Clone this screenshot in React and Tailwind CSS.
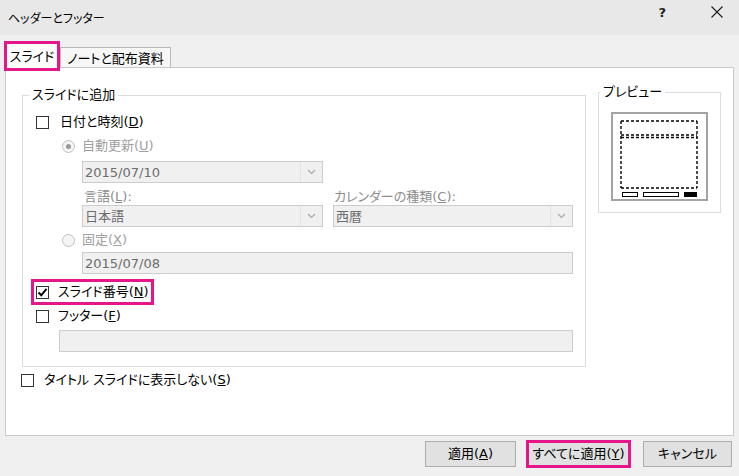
import React from 'react';

const PINK = 'border-[#e4168a]';

function Check({ checked }) {
  return (
    <span className="w-[13px] h-[13px] shrink-0 border border-[#333333] bg-white flex items-center justify-center">
      {checked && (
        <svg width="11" height="11" viewBox="0 0 11 11">
          <path d="M1.5 5.5 L4.2 8.3 L9.5 1.8" fill="none" stroke="#000" strokeWidth="2" />
        </svg>
      )}
    </span>
  );
}

function Radio({ checked }) {
  return (
    <span className="w-[13px] h-[13px] shrink-0 rounded-full border border-[#c2c2c2] bg-[#f4f4f4] flex items-center justify-center">
      {checked && <span className="w-[5px] h-[5px] rounded-full bg-[#9a9a9a]" />}
    </span>
  );
}

function Combo({ value, w }) {
  return (
    <div className={`${w} h-[22px] border border-[#cccccc] bg-[#f0f0f0] flex items-center`}>
      <span className="flex-1 pl-[2px] text-[#6d6d6d] leading-none">{value}</span>
      <span className="w-[22px] h-full border-l border-[#e2e2e2] flex items-center justify-center">
        <svg width="9" height="6" viewBox="0 0 9 6">
          <path d="M1 1 L4.5 4.5 L8 1" fill="none" stroke="#a8a8a8" strokeWidth="1.2" />
        </svg>
      </span>
    </div>
  );
}

function TextBox({ value, w }) {
  return (
    <div className={`${w} h-[22px] border border-[#cccccc] bg-[#f0f0f0] flex items-center pl-[2px] text-[#6d6d6d] leading-none`}>
      {value}
    </div>
  );
}

function Preview() {
  const dash = { stroke: '#000', strokeWidth: 1.4, strokeDasharray: '3 2', fill: 'none' };
  return (
    <svg width="97" height="89" viewBox="0 0 97 89">
      <rect x="1" y="1" width="95" height="87" fill="#fff" stroke="#a3a3a3" strokeWidth="2" />
      <line x1="10" y1="9" x2="86" y2="9" style={dash} />
      <line x1="10" y1="23" x2="86" y2="23" style={dash} />
      <line x1="10" y1="25.5" x2="86" y2="25.5" style={dash} />
      <line x1="10" y1="9" x2="10" y2="76" style={dash} />
      <line x1="86" y1="9" x2="86" y2="76" style={dash} />
      <line x1="10" y1="76" x2="86" y2="76" style={dash} />
      <rect x="11.5" y="80.5" width="15" height="4" fill="#fff" stroke="#000" strokeWidth="1" />
      <rect x="32.5" y="80.5" width="35" height="4" fill="#fff" stroke="#000" strokeWidth="1" />
      <rect x="73" y="80" width="13" height="5" fill="#000" />
    </svg>
  );
}

export default function App() {
  return (
    <div className="w-[739px] h-[476px] overflow-hidden bg-[#f0f0f0] flex flex-col text-[13px] text-black font-['DejaVu_Sans','Noto_Sans_CJK_JP',sans-serif] [font-feature-settings:'palt']">
      {/* Title bar */}
      <div className="h-[35px] shrink-0 bg-[#e8e8e8] flex items-start">
        <div className="pl-[8px] pt-[10px] text-[12px] leading-[16px] font-['Noto_Sans_CJK_JP',sans-serif]">ヘッダーとフッター</div>
        <div className="ml-auto h-[24px] flex items-center gap-[45px] pr-[16px]">
          <span className="text-[13px] font-bold leading-none text-[#222]">?</span>
          <svg width="12" height="12" viewBox="0 0 12 12">
            <path d="M0.5 0.5 L11.5 11.5 M11.5 0.5 L0.5 11.5" stroke="#222" strokeWidth="1.2" />
          </svg>
        </div>
      </div>

      {/* Tabs + panel */}
      <div className="px-[5px] pt-[6px] flex flex-col">
        <div className="h-[26px] flex items-end">
          <div className={`relative z-10 -ml-[1px] mb-[-4px] w-[56px] h-[30px] bg-white border-[3px] ${PINK} flex items-center justify-center pb-[1px] font-['Noto_Sans_CJK_JP',sans-serif]`}>
            スライド
          </div>
          <div className="w-[111px] h-[20px] border border-b-0 border-[#b9b9b9] bg-[#f7f7f7] flex items-center justify-center font-['Noto_Sans_CJK_JP',sans-serif]">
            ノートと配布資料
          </div>
        </div>

        <div className="h-[369px] border border-[#c9c9c9] bg-white flex pl-[16px] pt-[19px]">
          {/* Left column */}
          <div className="w-[564px] flex flex-col">
            <fieldset className="border border-[#dcdcdc]">
              <legend className="ml-[6px] px-[3px] leading-[16px]">スライドに追加</legend>
              <div className="pl-[13px] pr-[12px] pt-[10px] pb-[14px] flex flex-col">
                <div className="h-[18px] flex items-center gap-[11px]">
                  <Check />
                  <span>日付と時刻(<u>D</u>)</span>
                </div>
                <div className="ml-[26px] mt-[6px] h-[18px] flex items-center gap-[7px] text-[#a0a0a0]">
                  <Radio checked />
                  <span>自動更新(<u>U</u>)</span>
                </div>
                <div className="ml-[46px] mt-[6px]">
                  <Combo value="2015/07/10" w="w-[241px]" />
                </div>
                <div className="ml-[46px] mt-[5px] h-[16px] flex items-center text-[#8c8c8c] leading-none">
                  <span className="w-[251px] pl-[2px]">言語(<u>L</u>):</span>
                  <span className="pl-[1px]">カレンダーの種類(<u>C</u>):</span>
                </div>
                <div className="ml-[46px] mt-[1px] flex gap-[10px]">
                  <Combo value="日本語" w="w-[241px]" />
                  <Combo value="西暦" w="w-[240px]" />
                </div>
                <div className="ml-[26px] mt-[4px] h-[18px] flex items-center gap-[7px] text-[#a0a0a0]">
                  <Radio />
                  <span>固定(<u>X</u>)</span>
                </div>
                <div className="ml-[46px] mt-[3px]">
                  <TextBox value="2015/07/08" w="w-[491px]" />
                </div>
                <div className="relative mt-[9px] h-[18px] flex items-center gap-[9px]">
                  <span className={`absolute left-[-5px] top-[-4px] w-[123px] h-[26px] border-[3px] ${PINK}`} />
                  <Check checked />
                  <span>スライド番号(<u>N</u>)</span>
                </div>
                <div className="mt-[6px] h-[18px] flex items-center gap-[9px]">
                  <Check />
                  <span>フッター(<u>F</u>)</span>
                </div>
                <div className="ml-[23px] mt-[5px]">
                  <TextBox value="" w="w-[514px]" />
                </div>
              </div>
            </fieldset>
            <div className="-ml-[1px] mt-[4px] h-[18px] flex items-center gap-[10px]">
              <Check />
              <span>タイトル スライドに表示しない(<u>S</u>)</span>
            </div>
          </div>

          {/* Preview */}
          <div className="ml-[12px] mt-[-3px] w-[123px]">
            <fieldset className="border border-[#dcdcdc]">
              <legend className="ml-[1px] px-[3px] leading-[16px]">プレビュー</legend>
              <div className="pl-[12px] pt-[12px] pb-[11px]">
                <Preview />
              </div>
            </fieldset>
          </div>
        </div>
      </div>

      {/* Buttons */}
      <div className="mt-[4px] h-[28px] flex items-center justify-end pr-[7px]">
        <button className="w-[91px] h-[26px] bg-[#e1e1e1] border border-[#adadad]">
          適用(<u>A</u>)
        </button>
        <button className={`ml-[10px] w-[105px] h-[28px] bg-[#e1e1e1] border-[3px] ${PINK}`}>
          すべてに適用(<u>Y</u>)
        </button>
        <button className="ml-[12px] w-[89px] h-[26px] bg-[#e1e1e1] border border-[#adadad]">
          キャンセル
        </button>
      </div>
    </div>
  );
}
